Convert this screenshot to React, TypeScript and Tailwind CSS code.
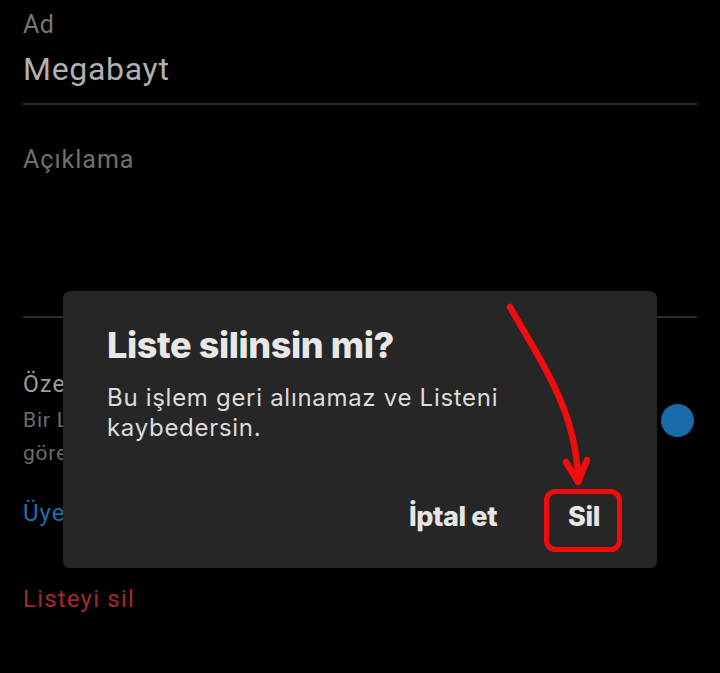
import React from "react";

export default function App() {
  return (
    <div className="relative w-[720px] h-[673px] bg-black overflow-hidden" style={{ fontFamily: "Roboto, 'Noto Sans', sans-serif" }}>
      {/* Background page */}
      <div className="px-[23px] pt-[10px]">
        <div className="text-[25px] leading-[30px] text-[#767676] tracking-[0.5px]">Ad</div>
        <div className="mt-[9px] text-[32px] leading-[40px] text-[#b0b0b0] tracking-[0.7px]">Megabayt</div>
        <div className="mt-[14px] h-[2px] bg-[#2a2a2a]" />
        <div className="mt-[40px] text-[25px] leading-[30px] text-[#6f6f6f] tracking-[1px]">Açıklama</div>
        <div className="mt-[141px] h-[2px] bg-[#2a2a2a]" />
        <div className="mt-[52px] flex items-center justify-between">
          <div className="flex flex-col">
            <div className="text-[23px] leading-[30px] text-[#9c9c9c] tracking-[1.2px]">Özel yap</div>
            <div className="mt-[4px] text-[21px] leading-[33px] text-[#6b6b6b] tracking-[0.8px] w-[520px]">
              Bir Listeyi özel yaptığında, yalnızca sen
              <br />
              görebilirsin.
            </div>
          </div>
          <div className="relative w-[56px] h-[32px] mr-[3px]">
            <div className="absolute right-0 top-0 w-[33px] h-[33px] rounded-full bg-[#1a6aa8]" />
          </div>
        </div>
        <div className="mt-[28px] text-[24px] leading-[30px] text-[#1d6fa8] tracking-[1px]">Üyeleri yönet</div>
        <div className="mt-[56px] text-[24px] leading-[30px] text-[#a52834] tracking-[1.2px]">Listeyi sil</div>
      </div>

      {/* Dialog */}
      <div
        className="absolute left-[63px] top-[291px] w-[594px] h-[277px] rounded-[7px] bg-[#262626] pl-[44px] pt-[33px] flex flex-col"
        style={{ fontFamily: "Inter, 'Noto Sans', sans-serif" }}
      >
        <div className="text-[36px] leading-[42px] font-extrabold text-[#e8e8e8] tracking-[-0.4px]">Liste silinsin mi?</div>
        <div className="mt-[17px] text-[24px] leading-[30px] text-[#dcdcdc] tracking-[0.7px]">
          Bu işlem geri alınamaz ve Listeni
          <br />
          kaybedersin.
        </div>
        <div className="mt-[59px] flex justify-end gap-[71px] pr-[57px] text-[27px] leading-[30px] font-extrabold text-[#e6e6e6] tracking-[-0.4px]">
          <span>İptal et</span>
          <span>Sil</span>
        </div>
      </div>

      {/* Annotation overlay */}
      <svg className="absolute left-0 top-0" width="720" height="673" viewBox="0 0 720 673">
        <path d="M510 307 C 540 360, 576 410, 578 478" fill="none" stroke="#f20d0d" strokeWidth="6.5" strokeLinecap="round" />
        <path d="M566 462 L578 482 L587 460" fill="none" stroke="#f20d0d" strokeWidth="6.5" strokeLinecap="round" strokeLinejoin="round" />
        <rect x="546.5" y="491.5" width="73" height="58" rx="9" fill="none" stroke="#f20d0d" strokeWidth="5" />
      </svg>
    </div>
  );
}
